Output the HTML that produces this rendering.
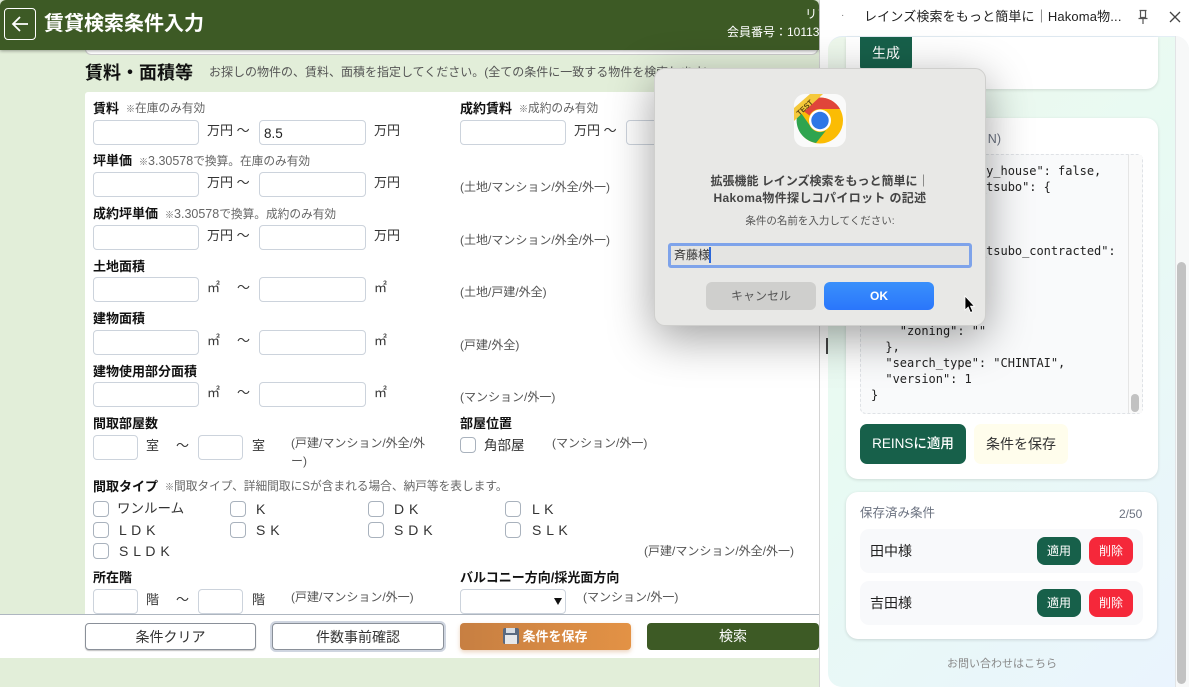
<!DOCTYPE html>
<html lang="ja"><head><meta charset="utf-8"><title>賃貸検索条件入力</title>
<style>
*{box-sizing:border-box}
html,body{margin:0;padding:0}
body{width:1189px;height:687px;overflow:hidden;position:relative;background:#fff;font-family:"Liberation Sans","Noto Sans CJK JP",sans-serif;color:#222}
.a{position:absolute}
.t{position:absolute;white-space:nowrap;line-height:16px;font-size:13px;color:#333}
.l{font-weight:700;color:#111;font-size:13px}
.n{font-size:11.700px;color:#666}
.n small{font-size:9px}
.n b{font-weight:400;font-size:12.500px}
.s{font-size:12px;color:#555}
.i{position:absolute;height:25px;width:106px;background:#fff;border:1px solid #ccd3dc;border-radius:4px}
.w{width:107px}
.i2{width:45px}
.c{position:absolute;width:16px;height:16px;background:#fff;border:1px solid #a9b2bd;border-radius:4px}
.k{font-size:14px;color:#333;letter-spacing:.5px}
.b{position:absolute;top:623px;height:27px;width:171px;border-radius:4px;text-align:center;line-height:27px;font-size:14px}
.sb{position:absolute;width:44px;height:28px;border-radius:8px;color:#fff;text-align:center;line-height:28px;font-size:12px}
pre{position:absolute;margin:0;font-family:"DejaVu Sans Mono","Liberation Mono",monospace;font-size:12px;line-height:16px;color:#222;letter-spacing:-.03px}
</style></head><body>

<!-- left page -->
<div class="a" style="left:0;top:0;width:819px;height:687px;background:#e2eed9"></div>
<div class="a" style="left:819px;top:0;width:1px;height:687px;background:#d4d4d4"></div>
<div class="a" style="left:85px;top:40px;width:733px;height:15px;background:#fff;border:1px solid #ccc;border-radius:0 0 6px 6px"></div>
<div class="a" style="left:0;top:0;width:819px;height:50px;background:#3d5a25;border-radius:6px 6px 0 0;box-shadow:0 1px 3px rgba(0,0,0,.35)"></div>
<div class="a" style="left:4px;top:8px;width:32px;height:32px;border:1px solid #fff;border-radius:4px"></div>
<svg class="a" style="left:11px;top:13px" width="20" height="22" viewBox="0 0 20 22"><path d="M2 11H17M9 4L2 11L9 18" fill="none" stroke="#fff" stroke-width="1.8"/></svg>
<div class="t" style="left:44px;top:12px;font-size:20px;line-height:24px;font-weight:700;color:#fff">賃貸検索条件入力</div>
<div class="a" style="left:700px;top:0;width:119px;height:50px;overflow:hidden">
<div class="t" style="left:105px;top:6px;color:#fff;font-size:12px">リフォーム</div>
<div class="t" style="left:27px;top:24px;color:#fff;font-size:12px">会員番号：10113</div>
</div>

<div class="t" style="left:85px;top:61px;font-size:18px;line-height:24px;font-weight:700;color:#111">賃料・面積等</div>
<div class="t" style="left:209px;top:64px;font-size:12px;color:#555">お探しの物件の、賃料、面積を指定してください。(全ての条件に一致する物件を検索します)</div>

<div class="a" style="left:85px;top:92px;width:734px;height:522px;background:#fff;border-radius:3px 0 0 0"></div>

<!-- row 1 -->
<div class="t l" style="left:93px;top:101px">賃料</div><div class="t n" style="left:126px;top:101px"><small>※</small>在庫のみ有効</div>
<div class="i" style="left:93px;top:120px"></div><div class="t" style="left:207px;top:123px">万円 〜</div>
<div class="i w" style="left:259px;top:120px;font-size:13.5px;line-height:25px;padding-left:4px;color:#222">8.5</div><div class="t" style="left:374px;top:123px">万円</div>
<div class="t l" style="left:460px;top:101px">成約賃料</div><div class="t n" style="left:519px;top:101px"><small>※</small>成約のみ有効</div>
<div class="i" style="left:460px;top:120px"></div><div class="t" style="left:574px;top:123px">万円 〜</div>
<div class="i" style="left:626px;top:120px"></div>
<!-- row 2 -->
<div class="t l" style="left:93px;top:153px">坪単価</div><div class="t n" style="left:139px;top:153px"><small>※</small><b>3.30578</b>で換算。在庫のみ有効</div>
<div class="i" style="left:93px;top:172px"></div><div class="t" style="left:207px;top:175px">万円 〜</div>
<div class="i w" style="left:259px;top:172px"></div><div class="t" style="left:374px;top:175px">万円</div>
<div class="t s" style="left:460px;top:179px">(土地/マンション/外全/外一)</div>
<!-- row 3 -->
<div class="t l" style="left:93px;top:206px">成約坪単価</div><div class="t n" style="left:165px;top:206px"><small>※</small><b>3.30578</b>で換算。成約のみ有効</div>
<div class="i" style="left:93px;top:225px"></div><div class="t" style="left:207px;top:228px">万円 〜</div>
<div class="i w" style="left:259px;top:225px"></div><div class="t" style="left:374px;top:228px">万円</div>
<div class="t s" style="left:460px;top:232px">(土地/マンション/外全/外一)</div>
<!-- row 4 -->
<div class="t l" style="left:93px;top:259px">土地面積</div>
<div class="i" style="left:93px;top:277px"></div><div class="t" style="left:207px;top:280px">㎡</div><div class="t" style="left:237px;top:280px">〜</div>
<div class="i w" style="left:259px;top:277px"></div><div class="t" style="left:374px;top:280px">㎡</div>
<div class="t s" style="left:460px;top:284px">(土地/戸建/外全)</div>
<!-- row 5 -->
<div class="t l" style="left:93px;top:311px">建物面積</div>
<div class="i" style="left:93px;top:330px"></div><div class="t" style="left:207px;top:333px">㎡</div><div class="t" style="left:237px;top:333px">〜</div>
<div class="i w" style="left:259px;top:330px"></div><div class="t" style="left:374px;top:333px">㎡</div>
<div class="t s" style="left:460px;top:337px">(戸建/外全)</div>
<!-- row 6 -->
<div class="t l" style="left:93px;top:364px">建物使用部分面積</div>
<div class="i" style="left:93px;top:382px"></div><div class="t" style="left:207px;top:385px">㎡</div><div class="t" style="left:237px;top:385px">〜</div>
<div class="i w" style="left:259px;top:382px"></div><div class="t" style="left:374px;top:385px">㎡</div>
<div class="t s" style="left:460px;top:389px">(マンション/外一)</div>
<!-- row 7 -->
<div class="t l" style="left:93px;top:416px">間取部屋数</div>
<div class="i i2" style="left:93px;top:435px"></div><div class="t" style="left:146px;top:438px">室</div><div class="t" style="left:176px;top:438px">〜</div>
<div class="i i2" style="left:198px;top:435px"></div><div class="t" style="left:252px;top:438px">室</div>
<div class="t s" style="left:291px;top:435px">(戸建/マンション/外全/外</div><div class="t s" style="left:291px;top:453px">ー)</div>
<div class="t l" style="left:460px;top:416px">部屋位置</div>
<div class="c" style="left:460px;top:437px"></div><div class="t" style="left:484px;top:438px;font-size:13.500px">角部屋</div>
<div class="t s" style="left:552px;top:435px">(マンション/外一)</div>
<!-- row 8 -->
<div class="t l" style="left:93px;top:479px">間取タイプ</div><div class="t n" style="left:165px;top:479px"><small>※</small>間取タイプ、詳細間取にSが含まれる場合、納戸等を表します。</div>
<div class="c" style="left:93px;top:501px"></div><div class="t" style="left:117px;top:501px;font-size:13.500px">ワンルーム</div>
<div class="c" style="left:230px;top:501px"></div><div class="t k" style="left:256px;top:501px">K</div>
<div class="c" style="left:368px;top:501px"></div><div class="t k" style="left:394px;top:501px">D K</div>
<div class="c" style="left:505px;top:501px"></div><div class="t k" style="left:532px;top:501px">L K</div>
<div class="c" style="left:93px;top:522px"></div><div class="t k" style="left:119px;top:522px">L D K</div>
<div class="c" style="left:230px;top:522px"></div><div class="t k" style="left:256px;top:522px">S K</div>
<div class="c" style="left:368px;top:522px"></div><div class="t k" style="left:394px;top:522px">S D K</div>
<div class="c" style="left:505px;top:522px"></div><div class="t k" style="left:532px;top:522px">S L K</div>
<div class="c" style="left:93px;top:543px"></div><div class="t k" style="left:119px;top:543px">S L D K</div>
<div class="t s" style="left:644px;top:543px">(戸建/マンション/外全/外一)</div>
<!-- row 9 -->
<div class="t l" style="left:93px;top:570px">所在階</div>
<div class="i i2" style="left:93px;top:589px"></div><div class="t" style="left:146px;top:592px">階</div><div class="t" style="left:176px;top:592px">〜</div>
<div class="i i2" style="left:198px;top:589px"></div><div class="t" style="left:252px;top:592px">階</div>
<div class="t s" style="left:291px;top:589px">(戸建/マンション/外一)</div>
<div class="t l" style="left:460px;top:570px">バルコニー方向/採光面方向</div>
<div class="i" style="left:460px;top:589px"></div>
<svg class="a" style="left:554px;top:598px" width="8" height="7"><path d="M0 0H8L4 7Z" fill="#111"/></svg>
<div class="t s" style="left:583px;top:589px">(マンション/外一)</div>

<!-- footer bar -->
<div class="a" style="left:0;top:614px;width:819px;height:44px;background:#fff;border-top:1px solid #aeb6c0"></div>
<div class="b" style="left:85px;background:#fff;border:1px solid #8a9099;box-shadow:0 1px 1px rgba(0,0,0,.25);color:#333">条件クリア</div>
<div class="b" style="left:272px;width:172px;background:#fff;border:1px solid #8a9099;box-shadow:0 0 0 2px #cfd5e0;color:#333">件数事前確認</div>
<div class="b" style="left:460px;background:linear-gradient(90deg,#c77f42,#e39245);color:#fff;font-weight:700;font-size:13px;box-shadow:0 2px 4px rgba(200,130,70,.35)"><span style="display:inline-block;position:relative;width:16px;height:16px;background:#5a6a80;border-radius:2px;vertical-align:-3px;margin-right:3px"><span class="a" style="left:3px;top:0;width:9px;height:5px;background:#d8dde3"></span><span class="a" style="left:2px;top:7px;width:12px;height:9px;background:#e6e8ea"></span></span>条件を保存</div>
<div class="b" style="left:647px;width:172px;background:#3d5a25;color:#fff">検索</div>

<!-- side panel -->
<div class="a" style="left:820px;top:0;width:369px;height:687px;background:#fff"></div>
<div class="t" style="left:841px;top:8px;font-size:10px;color:#777">·</div>
<div class="t" style="left:864px;top:9px;font-size:13px;color:#222;letter-spacing:.15px">レインズ検索をもっと簡単に｜Hakoma物...</div>
<svg class="a" style="left:1137px;top:9px" width="12" height="16" viewBox="0 0 12 16"><path d="M2.500 1.500H9.500M3.500 1.500V8.500H8.500V1.500M1.500 9.500H10.500M6 9.500V15" fill="none" stroke="#555" stroke-width="1.200"/></svg>
<svg class="a" style="left:1169px;top:11px" width="12" height="12" viewBox="0 0 12 12"><path d="M1 1L11 11M11 1L1 11" stroke="#444" stroke-width="1.300"/></svg>

<div class="a" style="left:828px;top:36px;width:361px;height:651px;background:linear-gradient(135deg,#eef8ec 0%,#e8faf3 45%,#eaf4fe 100%);border-radius:14px 14px 0 14px;border-top:1px solid #e4eef5;overflow:hidden"></div>
<div class="a" style="left:1175px;top:36px;width:14px;height:651px;background:#f7f8f8;border-left:1px solid #e2e4e6;border-radius:0 14px 0 0"></div>
<div class="a" style="left:1177px;top:262px;width:9px;height:422px;background:#c2c2c2;border-radius:5px"></div>

<!-- card 1 -->
<div class="a" style="left:846px;top:37px;width:312px;height:52px;background:#fff;border-radius:0 0 12px 12px;box-shadow:0 1px 3px rgba(0,0,0,.12)"></div>
<div class="a" style="left:860px;top:37px;width:52px;height:35px;background:#17604a;border-radius:0 0 6px 6px;color:#fff;text-align:center;line-height:33px;font-size:14px">生成</div>

<!-- card 2 -->
<div class="a" style="left:846px;top:118px;width:312px;height:361px;background:#fff;border-radius:12px;box-shadow:0 1px 3px rgba(0,0,0,.12)"></div>
<div class="t" style="right:188px;top:131px;font-size:12.500px;color:#6b7280">生成された条件(JSO<span style="margin-left:3px">N)</span></div>
<div class="a" style="left:860px;top:154px;width:283px;height:260px;background:#f9fafb;border:1px dashed #dfe2e6;border-radius:6px;overflow:hidden"></div>
<div class="a" style="left:1128px;top:155px;width:14px;height:258px;background:#fafafa;border-left:1px solid #e5e5e5"></div>
<div class="a" style="left:1131px;top:394px;width:8px;height:18px;background:#c2c2c2;border-radius:4px"></div>
<pre style="left:871px;top:163px">  "is_shared_only_house": false,
  "monthly_rent_tsubo": {
    "from": "",
    "to": ""
  },
  "monthly_rent_tsubo_contracted":
    "from": "",
    "to": ""
  },
  "land": {
    "zoning": ""
  },
  "search_type": "CHINTAI",
  "version": 1
}</pre>
<div class="a" style="left:860px;top:424px;width:106px;height:40px;background:#17604a;border-radius:7px;color:#fff;text-align:center;line-height:40px;font-size:13.500px;font-weight:500">REINSに適用</div>
<div class="a" style="left:974px;top:424px;width:94px;height:40px;background:#fffdec;border-radius:7px;color:#333;text-align:center;line-height:40px;font-size:14px">条件を保存</div>

<!-- card 3 -->
<div class="a" style="left:846px;top:492px;width:311px;height:147px;background:#fff;border-radius:12px;box-shadow:0 1px 3px rgba(0,0,0,.14)"></div>
<div class="t" style="left:860px;top:505px;font-size:12.500px;color:#6b7280">保存済み条件</div>
<div class="t" style="left:1119px;top:506px;font-size:12px;color:#6b7280">2/50</div>
<div class="a" style="left:860px;top:529px;width:283px;height:44px;background:#f8f9fb;border-radius:9px"></div>
<div class="t" style="left:870px;top:543px;font-size:14px;color:#222">田中様</div>
<div class="sb" style="left:1037px;top:537px;background:#17604a">適用</div>
<div class="sb" style="left:1089px;top:537px;background:#f5283a">削除</div>
<div class="a" style="left:860px;top:581px;width:283px;height:44px;background:#f8f9fb;border-radius:9px"></div>
<div class="t" style="left:870px;top:595px;font-size:14px;color:#222">吉田様</div>
<div class="sb" style="left:1037px;top:589px;background:#17604a">適用</div>
<div class="sb" style="left:1089px;top:589px;background:#f5283a">削除</div>
<div class="t" style="left:947px;top:656px;font-size:11px;color:#888">お問い合わせはこちら</div>

<!-- pipe artifact -->
<div class="a" style="left:826px;top:338px;width:2px;height:16px;background:#444"></div>

<!-- dialog -->
<div class="a" style="left:654px;top:68px;width:332px;height:258px;background:#e8e8e6;border-radius:11px;border:1px solid #cfcfcd;box-shadow:0 12px 45px rgba(0,0,0,.38)"></div>
<svg class="a" style="left:794px;top:94px" width="52" height="53" viewBox="0 0 52 53">
<rect width="52" height="53" rx="11" fill="#fafafa"/>
<circle cx="26" cy="26.500" r="23" fill="#fbbc04"/>
<path d="M26 3.500A23 23 0 0 1 46 15H26A11.500 11.500 0 0 0 15.500 21.500L6 14.500A23 23 0 0 1 26 3.500Z" fill="#e0453a"/>
<path d="M5 16A23 23 0 0 0 22 49L32 36.500A11.500 11.500 0 0 1 15.500 31Z" fill="#2fa44f"/>
<circle cx="26" cy="26.500" r="11" fill="#fff"/>
<circle cx="26" cy="26.500" r="8.700" fill="#2f77e6"/>
<path d="M0 14L16 0H29L0 27Z" fill="#f5c93b"/>
<text text-anchor="middle" font-size="7.500" font-weight="700" fill="#5a4510" font-family="Liberation Sans" transform="translate(12.500 15.500) rotate(-43)">TEST</text>
</svg>
<div class="t" style="left:654px;top:173px;width:332px;text-align:center;font-size:12px;line-height:16.500px;font-weight:700;color:#444">拡張機能 レインズ検索をもっと簡単に｜<br><span style="letter-spacing:.35px">Hakoma物件探しコパイロット の記述</span></div>
<div class="t" style="left:654px;top:213px;width:332px;text-align:center;font-size:10.500px;color:#555">条件の名前を入力してください:</div>
<div class="a" style="left:668px;top:243px;width:304px;height:25px;background:#e4e4e2;border:3px solid #7ea3ea;border-radius:3px"></div>
<div class="t" style="left:674px;top:247px;font-size:12px;color:#333">斉藤様</div>
<div class="a" style="left:709px;top:247px;width:1.500px;height:16px;background:#2a66d8"></div>
<div class="a" style="left:706px;top:282px;width:110px;height:28px;background:#cfcfcd;border-radius:6px;text-align:center;line-height:28px;font-size:12px;color:#555">キャンセル</div>
<div class="a" style="left:824px;top:282px;width:110px;height:28px;background:linear-gradient(#3a90fb,#2a76fb);border-radius:6px;text-align:center;line-height:28px;font-size:12px;font-weight:700;color:#fff">OK</div>
<svg class="a" style="left:963px;top:295px" width="13" height="19" viewBox="0 0 13 19"><path d="M2 1V15L5.200 12L7.500 17.500L9.800 16.500L7.500 11.200H11.500Z" fill="#000" stroke="#fff" stroke-width=".8"/></svg>

</body></html>
